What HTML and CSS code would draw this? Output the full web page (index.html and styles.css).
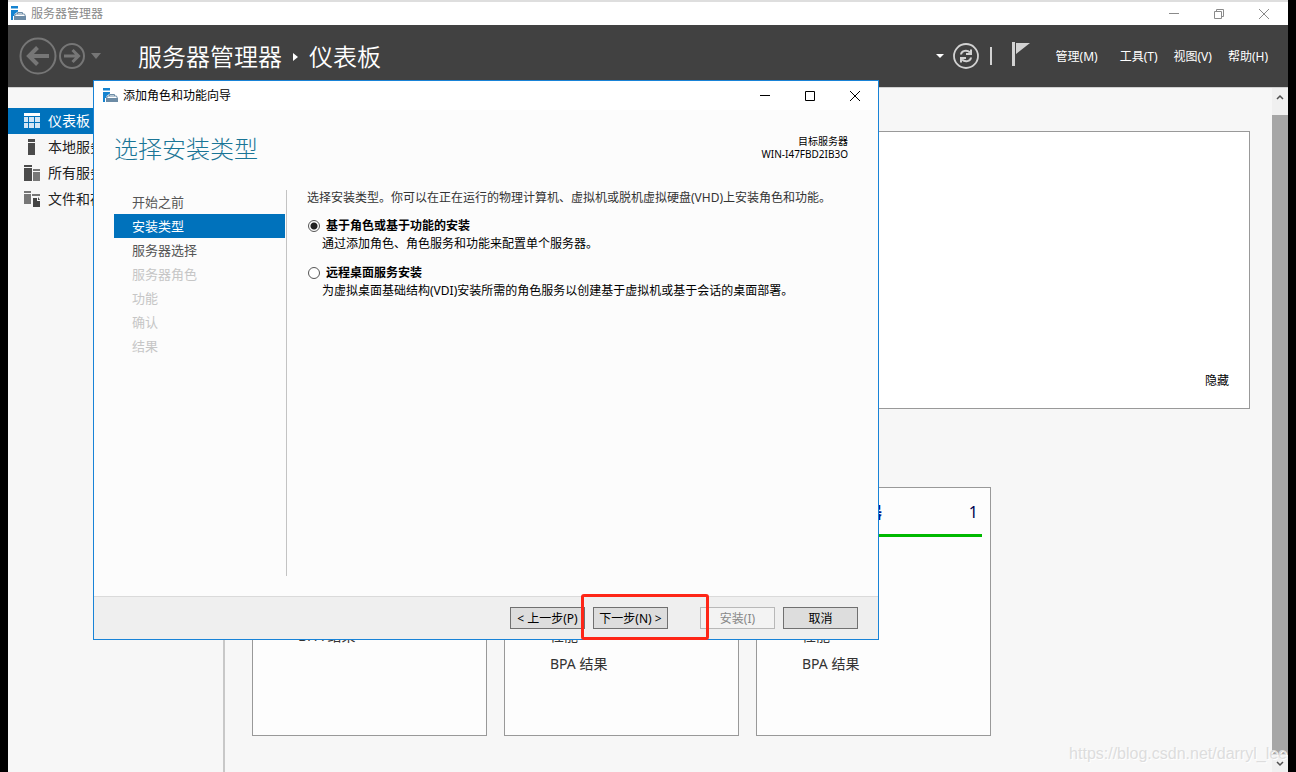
FILE: index.html
```html
<!DOCTYPE html>
<html lang="zh-CN">
<head>
<meta charset="utf-8">
<title>服务器管理器</title>
<link rel="stylesheet" href="styles.css">
</head>
<body>
<svg class="defs" aria-hidden="true">
  <symbol id="app" viewBox="0 0 15 15">
    <path fill="#1583d0" d="M0 0h7v2.500H0zM0 4h7v1.500L3.500 8v2H2v4H0z"/>
    <path fill="none" stroke="#6d8ca6" stroke-width="1" d="M6.500 8V6.500h5V8"/>
    <path fill="none" stroke="#6d8ca6" d="M4.500 8h9l1 2.500h-11z"/>
    <path fill="#6d8ca6" d="M3 10h4v1h4v-1h4v4H3z"/>
  </symbol>
  <symbol id="min" viewBox="0 0 12 12"><path d="M1 5.500h10" fill="none" stroke="currentColor"/></symbol>
  <symbol id="max" viewBox="0 0 12 12"><path d="M1.500 1.500h9v9h-9z" fill="none" stroke="currentColor"/></symbol>
  <symbol id="restore" viewBox="0 0 12 12"><path d="M1.500 3.500h7v7h-7zM3.500 3.500v-2h7v7h-2" fill="none" stroke="currentColor"/></symbol>
  <symbol id="close" viewBox="0 0 12 12"><path d="M1 1l10 10M11 1L1 11" fill="none" stroke="currentColor"/></symbol>
</svg>
<div class="window">
  <header class="titlebar">
    <svg class="app-icon"><use href="#app"/></svg>
    <span>服务器管理器</span>
    <div class="controls">
      <button type="button" aria-label="最小化"><svg><use href="#min"/></svg></button>
      <button type="button" aria-label="还原"><svg><use href="#restore"/></svg></button>
      <button type="button" aria-label="关闭"><svg><use href="#close"/></svg></button>
    </div>
  </header>
  <div class="banner">
    <button type="button" class="back" aria-label="后退"><svg viewBox="0 0 38 38" width="38" height="38" fill="none" stroke="#767676"><circle cx="19" cy="19" r="17.500" stroke-width="2"/><path d="M30 19H10M18.500 10.500L10 19l8.500 8.500" stroke-width="4"/></svg></button>
    <button type="button" aria-label="前进"><svg viewBox="0 0 26 26" width="26" height="26" fill="none" stroke="#767676"><circle cx="13" cy="13" r="12" stroke-width="2"/><path d="M5 13h14M13.500 7l6 6-6 6" stroke-width="3"/></svg></button>
    <button type="button" class="history" aria-label="历史记录"><svg viewBox="0 0 10 6" width="10" height="6"><path fill="#767676" d="M0 0h10L5 6z"/></svg></button>
    <div class="crumbs"><span>服务器管理器</span><svg viewBox="0 0 5 8" width="5" height="8"><path fill="#fff" d="M0 0l5 4-5 4z"/></svg><span>仪表板</span></div>
    <div class="tools">
      <svg viewBox="0 0 8 4" width="8" height="4"><path fill="#fff" d="M0 0h8L4 4z"/></svg>
      <button type="button" aria-label="刷新"><svg viewBox="0 0 28 28" width="28" height="28" fill="none" stroke="#d2d2d2"><circle cx="14" cy="14" r="12" stroke-width="1.800"/><path stroke-width="2" d="M9 12.500c.5-4 6-5 9-2M19 15.500c-.5 4-6 5-9 2"/><path stroke-width="2" d="M19 7.500V12h-5M9 20.500V16h5"/></svg></button>
      <span class="bar"></span>
      <button type="button" class="flag" aria-label="通知"><svg viewBox="0 0 18 24" width="18" height="24"><path fill="#d2d2d2" d="M0 0h3v24H0zM4 1h14L4 12z"/></svg></button>
    </div>
    <nav class="menu">
      <button type="button">管理(M)</button>
      <button type="button">工具(T)</button>
      <button type="button">视图(V)</button>
      <button type="button">帮助(H)</button>
    </nav>
  </div>
  <div class="body">
    <nav class="sidebar">
      <a class="item active" href="#"><svg viewBox="0 0 16 16"><path fill="#fff" d="M0 0h16v3H0z"/><path fill="#d3e6f5" d="M0 4h4v5H0zM5 4h5v5H5zM11 4h5v5h-5zM0 10h4v5H0zM5 10h5v5H5zM11 10h5v5h-5z"/></svg>仪表板</a>
      <a class="item" href="#"><svg viewBox="0 0 16 16"><path fill="#4b4b4b" d="M4 0h7v3H4zM4 4h7v12H4z"/></svg>本地服务器</a>
      <a class="item" href="#"><svg viewBox="0 0 16 16"><path fill="#4b4b4b" d="M0 0h8v2H0zM0 3h8v13H0z"/><path fill="#777" d="M9 4h7v2H9zM9 7h7v9H9z"/></svg>所有服务器</a>
      <a class="item" href="#"><svg viewBox="0 0 16 16"><path fill="#777" d="M0 0h7v2H0zM0 3h7v10H0zM8 3h8v2H8z"/><path fill="#444" d="M9 7h4v3h3v6H9z"/><path fill="#444" d="M14 6l2 3h-2z"/></svg>文件和存储服务</a>
    </nav>
    <main class="content">
      <section class="welcome"><button type="button">隐藏</button></section>
      <div class="tiles">
        <section class="tile first"><ul><li>BPA 结果</li></ul></section>
        <section class="tile"><ul><li>性能</li><li>BPA 结果</li></ul></section>
        <section class="tile"><h2><span>所有服务器</span><b>1</b></h2><ul><li>性能</li><li>BPA 结果</li></ul></section>
      </div>
    </main>
    <div class="scrollbar">
      <button type="button" aria-label="向上滚动"><svg viewBox="0 0 8 6" width="8" height="6"><path d="M1 5l3-3 3 3" fill="none" stroke="#505050" stroke-width="1.500"/></svg></button>
      <div class="thumb"></div>
      <button type="button" class="down" aria-label="向下滚动"><svg viewBox="0 0 8 6" width="8" height="6"><path d="M1 1l3 3 3-3" fill="none" stroke="#505050" stroke-width="1.500"/></svg></button>
    </div>
  </div>
</div>

<div class="dialog" role="dialog" aria-labelledby="dlg-title">
  <header class="dialog-bar">
    <svg class="app-icon"><use href="#app"/></svg>
    <span id="dlg-title">添加角色和功能向导</span>
    <div class="controls">
      <button type="button" aria-label="最小化"><svg><use href="#min"/></svg></button>
      <button type="button" aria-label="最大化"><svg><use href="#max"/></svg></button>
      <button type="button" aria-label="关闭"><svg><use href="#close"/></svg></button>
    </div>
  </header>
  <div class="dialog-head">
    <h1>选择安装类型</h1>
    <p>目标服务器<br>WIN-I47FBD2IB3O</p>
  </div>
  <div class="dialog-main">
    <ol class="steps">
      <li>开始之前</li>
      <li class="current">安装类型</li>
      <li>服务器选择</li>
      <li class="off">服务器角色</li>
      <li class="off">功能</li>
      <li class="off">确认</li>
      <li class="off">结果</li>
    </ol>
    <form class="options">
      <p class="intro">选择安装类型。你可以在正在运行的物理计算机、虚拟机或脱机虚拟硬盘(VHD)上安装角色和功能。</p>
      <div class="option">
        <input type="radio" name="kind" id="role" checked><label for="role">基于角色或基于功能的安装</label>
        <p>通过添加角色、角色服务和功能来配置单个服务器。</p>
      </div>
      <div class="option">
        <input type="radio" name="kind" id="rds"><label for="rds">远程桌面服务安装</label>
        <p>为虚拟桌面基础结构(VDI)安装所需的角色服务以创建基于虚拟机或基于会话的桌面部署。</p>
      </div>
    </form>
  </div>
  <footer class="dialog-foot">
    <button type="button">&lt; 上一步(P)</button>
    <button type="button" class="next">下一步(N) &gt;</button>
    <button type="button" disabled>安装(I)</button>
    <button type="button">取消</button>
  </footer>
  <div class="highlight"></div>
</div>
<div class="watermark">https://blog.csdn.net/darryl_lee</div>
</body>
</html>
```

FILE: styles.css
```css
* { box-sizing: border-box; margin: 0; padding: 0; }
body {
  height: 100vh;
  overflow: hidden;
  padding: 0 8px;
  background: #000;
  color: #000;
  font: 12px/16px "Noto Sans", "Noto Sans CJK SC", sans-serif;
}
button { border: 0; background: none; color: inherit; font: inherit; }
button svg { display: block; }
ul, ol { list-style: none; }
.defs { position: absolute; width: 0; height: 0; }

.window { display: flex; flex-direction: column; height: 100%; background: #f7f7f7; }
.titlebar {
  display: flex;
  align-items: center;
  height: 25px;
  padding: 0 18px 0 3px;
  border-top: 2px solid #dedede;
  background: #fff;
  color: #8a8a8a;
}
.app-icon { width: 15px; height: 15px; margin-right: 5px; }
.controls { display: flex; gap: 33px; margin-left: auto; }
.controls svg { width: 12px; height: 12px; }

.banner {
  display: flex;
  align-items: center;
  flex: none;
  height: 62px;
  padding: 0 20px 0 11px;
  background: #414141;
  color: #fff;
}
.back { margin-right: 2px; }
.history { margin-left: 6px; }
.crumbs { display: flex; align-items: center; gap: 11px; margin-left: 37px; padding-top: 2px; font-size: 24px; line-height: 32px; font-weight: 350; }
.tools { display: flex; align-items: center; margin-left: auto; }
.tools button { margin-left: 8px; }
.bar { width: 2px; height: 18px; margin-left: 10px; background: #d2d2d2; }
.tools .flag { margin: 0 0 4px 20px; }
.menu { display: flex; gap: 16px; margin-left: 26px; padding-top: 2px; }
.menu button:first-child { margin-right: 6px; }

.body { display: flex; flex: 1; min-height: 0; border-top: 1px solid #d0d0d0; }
.sidebar { width: 217px; padding-top: 20px; border-right: 2px solid #c8c8c8; }
.item {
  display: flex;
  align-items: center;
  gap: 8px;
  height: 26px;
  padding-left: 16px;
  color: #222;
  font-size: 14px;
  text-decoration: none;
}
.item svg { width: 16px; height: 16px; }
.item.active { background: #0072bc; color: #fff; }
.content { flex: 1; padding: 43px 22px 0 27px; }
.welcome {
  display: flex;
  align-items: flex-end;
  justify-content: flex-end;
  height: 278px;
  padding: 0 20px 19px;
  border: 1px solid #999;
  background: #fff;
}
.tiles { display: flex; gap: 17px; margin-top: 78px; }
.tile {
  display: flex;
  flex-direction: column;
  justify-content: flex-end;
  width: 235px;
  height: 249px;
  padding: 0 8px 57px;
  border: 1px solid #999;
  background: #fdfdfd;
  color: #333;
  font-size: 14px;
  line-height: 28px;
}
.tile.first { padding-bottom: 85px; }
.tile ul { padding-left: 37px; }
.tile h2 {
  display: flex;
  justify-content: space-between;
  margin-bottom: auto;
  padding: 10px 4px 8px 37px;
  border-bottom: 3px solid #00b900;
  color: #00188f;
  font-size: 16px;
  line-height: 28px;
}
.tile b { color: #000050; font-weight: 400; }
.scrollbar { display: flex; flex-direction: column; width: 16px; background: #f0f0f0; }
.scrollbar button { display: flex; align-items: center; justify-content: center; height: 17px; }
.thumb { flex: 1; margin-top: 10px; background: #a6a6a6; }

.dialog {
  position: absolute;
  left: 93px;
  top: 80px;
  display: flex;
  flex-direction: column;
  width: 786px;
  height: 560px;
  border: 1px solid #1883d7;
  background: #fcfcfc;
}
.dialog-bar { display: flex; align-items: center; height: 29px; padding: 0 17px 0 9px; background: #fff; }
.dialog-head { display: flex; justify-content: space-between; padding: 25px 30px 0 20px; }
.dialog-head h1 { color: #1a7596; font-size: 24px; line-height: 28px; font-weight: 300; }
.dialog-head p { font-size: 10px; line-height: 13px; text-align: right; }
.dialog-main { display: flex; flex: 1; padding: 27px 20px 20px; }
.steps { width: 173px; border-right: 1px solid #c3c3c3; color: #555; font-size: 13px; line-height: 24px; }
.steps li { margin-right: 1px; padding-left: 18px; }
.steps .current { background: #0072bc; color: #fff; }
.steps .off { color: #c6c6c6; }
.options { padding-left: 20px; }
.intro { margin-bottom: 12px; color: #333; line-height: 15px; }
.option { display: grid; grid-template-columns: 12px auto; column-gap: 6px; align-items: center; margin: 0 0 12px 1px; }
.option label { line-height: 18px; font-weight: 700; }
.option p { grid-column: 1 / -1; padding-left: 14px; line-height: 17px; }
.option input {
  appearance: none;
  width: 12px;
  height: 12px;
  border: 1px solid #555;
  border-radius: 50%;
  background: #fff;
}
.option input:checked { background: radial-gradient(circle, #222 0 3px, #fff 4px); }
.dialog-foot {
  display: flex;
  justify-content: flex-end;
  align-items: center;
  gap: 8px;
  height: 43px;
  padding-right: 20px;
  border-top: 1px solid #dadada;
  background: #efefef;
}
.dialog-foot button { width: 75px; height: 22px; padding-top: 2px; border: 1px solid #707070; background: #ddd; white-space: nowrap; }
.dialog-foot .next { margin-right: 24px; }
.dialog-foot button:disabled { border-color: #b8b8b8; background: #f3f3f3; color: #888; }
.highlight {
  position: absolute;
  right: 169px;
  bottom: -1px;
  width: 128px;
  height: 46px;
  border: 3px solid #fe2617;
  border-radius: 3px;
}
.watermark {
  position: absolute;
  right: 9px;
  bottom: 8px;
  color: #ddd;
  font: 16px/20px "Liberation Sans", sans-serif;
  text-shadow: 1px 1px 0 #fff;
}
```
